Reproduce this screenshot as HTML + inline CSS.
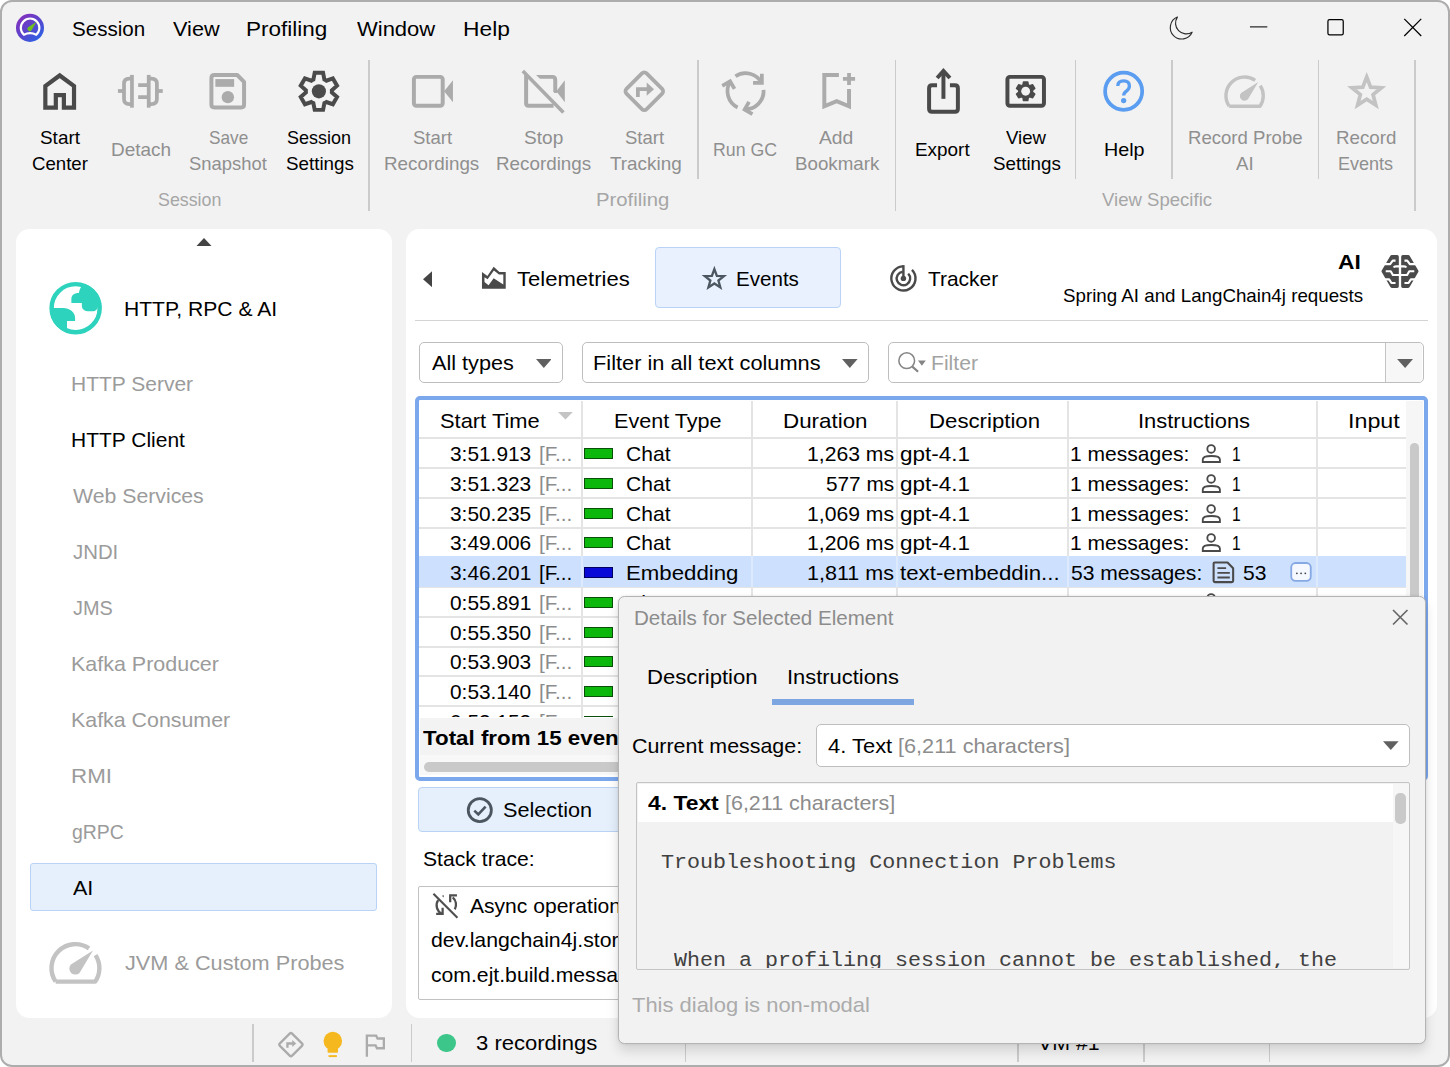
<!DOCTYPE html>
<html lang="en"><head><meta charset="utf-8"><title>JProfiler</title>
<style>
html,body{margin:0;padding:0;background:#fff;}
body{width:1450px;height:1067px;position:relative;overflow:hidden;font-family:"Liberation Sans",sans-serif;}
.b{position:absolute;box-sizing:border-box;}
.t{position:absolute;white-space:nowrap;transform-origin:0 0;display:block;}
.m{font-family:"Liberation Mono",monospace;}
.clip{overflow:hidden;}
</style></head><body>
<div class="b win" style="left:0.0px;top:0.0px;width:1450.0px;height:1067.0px;border:2px solid #adadad;border-radius:12px;background:#f2f2f2;"></div>
<span class="t" style="left:71.5px;top:19.0px;font-size:20.8px;line-height:20.8px;color:#000;transform:scaleX(0.9894);">Session</span>
<span class="t" style="left:172.6px;top:19.0px;font-size:20.8px;line-height:20.8px;color:#000;transform:scaleX(1.0420);">View</span>
<span class="t" style="left:246.3px;top:19.0px;font-size:20.8px;line-height:20.8px;color:#000;transform:scaleX(1.0821);">Profiling</span>
<span class="t" style="left:357.4px;top:19.0px;font-size:20.8px;line-height:20.8px;color:#000;transform:scaleX(1.0574);">Window</span>
<span class="t" style="left:463.2px;top:19.0px;font-size:20.8px;line-height:20.8px;color:#000;transform:scaleX(1.0957);">Help</span>
<span class="t" style="left:40.4px;top:129.0px;font-size:18.2px;line-height:18.2px;color:#000;transform:scaleX(1.0404);">Start</span>
<span class="t" style="left:31.8px;top:155.0px;font-size:18.2px;line-height:18.2px;color:#000;transform:scaleX(1.0241);">Center</span>
<span class="t" style="left:110.8px;top:141.0px;font-size:18.2px;line-height:18.2px;color:#8f8f8f;transform:scaleX(1.0426);">Detach</span>
<span class="t" style="left:208.9px;top:129.0px;font-size:18.2px;line-height:18.2px;color:#8f8f8f;transform:scaleX(0.9462);">Save</span>
<span class="t" style="left:189.2px;top:155.0px;font-size:18.2px;line-height:18.2px;color:#8f8f8f;transform:scaleX(1.0121);">Snapshot</span>
<span class="t" style="left:286.8px;top:129.0px;font-size:18.2px;line-height:18.2px;color:#000;transform:scaleX(0.9874);">Session</span>
<span class="t" style="left:285.7px;top:155.0px;font-size:18.2px;line-height:18.2px;color:#000;transform:scaleX(1.0321);">Settings</span>
<span class="t" style="left:412.8px;top:129.0px;font-size:18.2px;line-height:18.2px;color:#8f8f8f;transform:scaleX(1.0191);">Start</span>
<span class="t" style="left:384.0px;top:155.0px;font-size:18.2px;line-height:18.2px;color:#8f8f8f;transform:scaleX(1.0356);">Recordings</span>
<span class="t" style="left:524.4px;top:129.0px;font-size:18.2px;line-height:18.2px;color:#8f8f8f;transform:scaleX(1.0487);">Stop</span>
<span class="t" style="left:496.3px;top:155.0px;font-size:18.2px;line-height:18.2px;color:#8f8f8f;transform:scaleX(1.0345);">Recordings</span>
<span class="t" style="left:624.6px;top:129.0px;font-size:18.2px;line-height:18.2px;color:#8f8f8f;transform:scaleX(1.0164);">Start</span>
<span class="t" style="left:609.6px;top:155.0px;font-size:18.2px;line-height:18.2px;color:#8f8f8f;transform:scaleX(1.0383);">Tracking</span>
<span class="t" style="left:713.1px;top:141.0px;font-size:18.2px;line-height:18.2px;color:#8f8f8f;transform:scaleX(0.9747);">Run GC</span>
<span class="t" style="left:819.4px;top:129.0px;font-size:18.2px;line-height:18.2px;color:#8f8f8f;transform:scaleX(1.0606);">Add</span>
<span class="t" style="left:795.0px;top:155.0px;font-size:18.2px;line-height:18.2px;color:#8f8f8f;transform:scaleX(1.0294);">Bookmark</span>
<span class="t" style="left:915.4px;top:141.0px;font-size:18.2px;line-height:18.2px;color:#000;transform:scaleX(1.0401);">Export</span>
<span class="t" style="left:1005.7px;top:129.0px;font-size:18.2px;line-height:18.2px;color:#000;transform:scaleX(1.0222);">View</span>
<span class="t" style="left:992.6px;top:155.0px;font-size:18.2px;line-height:18.2px;color:#000;transform:scaleX(1.0321);">Settings</span>
<span class="t" style="left:1104.1px;top:141.0px;font-size:18.2px;line-height:18.2px;color:#000;transform:scaleX(1.0847);">Help</span>
<span class="t" style="left:1188.1px;top:129.0px;font-size:18.2px;line-height:18.2px;color:#8f8f8f;transform:scaleX(1.0208);">Record Probe</span>
<span class="t" style="left:1236.0px;top:155.0px;font-size:18.2px;line-height:18.2px;color:#8f8f8f;transform:scaleX(1.0282);">AI</span>
<span class="t" style="left:1336.1px;top:129.0px;font-size:18.2px;line-height:18.2px;color:#8f8f8f;transform:scaleX(1.0294);">Record</span>
<span class="t" style="left:1338.3px;top:155.0px;font-size:18.2px;line-height:18.2px;color:#8f8f8f;transform:scaleX(0.9905);">Events</span>
<span class="t" style="left:157.9px;top:191.0px;font-size:18.2px;line-height:18.2px;color:#a6a6a6;transform:scaleX(0.9795);">Session</span>
<span class="t" style="left:596.2px;top:191.0px;font-size:18.2px;line-height:18.2px;color:#a6a6a6;transform:scaleX(1.1147);">Profiling</span>
<span class="t" style="left:1101.7px;top:191.0px;font-size:18.2px;line-height:18.2px;color:#a6a6a6;transform:scaleX(1.0207);">View Specific</span>
<div class="b " style="left:368.0px;top:60.4px;width:1.6px;height:151.1px;background:#cbcbcb;"></div>
<div class="b " style="left:697.3px;top:60.4px;width:1.6px;height:118.6px;background:#cbcbcb;"></div>
<div class="b " style="left:894.9px;top:60.4px;width:1.6px;height:151.1px;background:#cbcbcb;"></div>
<div class="b " style="left:1074.8px;top:60.4px;width:1.6px;height:118.6px;background:#cbcbcb;"></div>
<div class="b " style="left:1171.1px;top:60.4px;width:1.6px;height:118.6px;background:#cbcbcb;"></div>
<div class="b " style="left:1317.9px;top:60.4px;width:1.6px;height:118.6px;background:#cbcbcb;"></div>
<div class="b " style="left:1414.2px;top:60.4px;width:1.6px;height:151.1px;background:#cbcbcb;"></div>
<div class="b " style="left:16.0px;top:229.0px;width:376.0px;height:789.0px;background:#fff;border-radius:13.5px;"></div>
<svg class="b" style="left:195.5px;top:237.5px;" width="16.0" height="8.5" viewBox="0 0 16 8.5"><path d="M8 0 L16 8.5 L0 8.5 Z" fill="#444"/></svg>
<span class="t" style="left:124.3px;top:299.0px;font-size:20.8px;line-height:20.8px;color:#000;transform:scaleX(1.0137);">HTTP, RPC &amp; AI</span>
<span class="t" style="left:71.1px;top:374.0px;font-size:20.8px;line-height:20.8px;color:#9b9b9b;transform:scaleX(1.0094);">HTTP Server</span>
<span class="t" style="left:71.1px;top:430.0px;font-size:20.8px;line-height:20.8px;color:#000;transform:scaleX(1.0092);">HTTP Client</span>
<span class="t" style="left:72.8px;top:486.0px;font-size:20.8px;line-height:20.8px;color:#9b9b9b;transform:scaleX(1.0221);">Web Services</span>
<span class="t" style="left:72.5px;top:542.0px;font-size:20.8px;line-height:20.8px;color:#9b9b9b;transform:scaleX(0.9797);">JNDI</span>
<span class="t" style="left:72.5px;top:598.0px;font-size:20.8px;line-height:20.8px;color:#9b9b9b;transform:scaleX(0.9541);">JMS</span>
<span class="t" style="left:71.1px;top:654.0px;font-size:20.8px;line-height:20.8px;color:#9b9b9b;transform:scaleX(1.0322);">Kafka Producer</span>
<span class="t" style="left:71.1px;top:710.0px;font-size:20.8px;line-height:20.8px;color:#9b9b9b;transform:scaleX(1.0276);">Kafka Consumer</span>
<span class="t" style="left:71.0px;top:766.0px;font-size:20.8px;line-height:20.8px;color:#9b9b9b;transform:scaleX(1.0742);">RMI</span>
<span class="t" style="left:72.0px;top:822.0px;font-size:20.8px;line-height:20.8px;color:#9b9b9b;transform:scaleX(0.9356);">gRPC</span>
<div class="b " style="left:30.0px;top:862.8px;width:346.8px;height:48.0px;background:#e6f0fd;border:1.5px solid #b9d3f6;border-radius:3px;"></div>
<span class="t" style="left:72.8px;top:878.0px;font-size:20.8px;line-height:20.8px;color:#000;transform:scaleX(1.0346);">AI</span>
<span class="t" style="left:124.5px;top:953.0px;font-size:20.8px;line-height:20.8px;color:#9b9b9b;transform:scaleX(1.0432);">JVM &amp; Custom Probes</span>
<div class="b " style="left:252.0px;top:1024.0px;width:1.6px;height:38.0px;background:#cbcbcb;"></div>
<div class="b " style="left:410.7px;top:1024.0px;width:1.6px;height:38.0px;background:#cbcbcb;"></div>
<div class="b " style="left:684.5px;top:1024.0px;width:1.6px;height:38.0px;background:#cbcbcb;"></div>
<div class="b " style="left:1017.2px;top:1024.0px;width:1.6px;height:38.0px;background:#cbcbcb;"></div>
<div class="b " style="left:1143.2px;top:1024.0px;width:1.6px;height:38.0px;background:#cbcbcb;"></div>
<div class="b " style="left:1268.9px;top:1024.0px;width:1.6px;height:38.0px;background:#cbcbcb;"></div>
<div class="b " style="left:437.3px;top:1033.6px;width:18.8px;height:18.8px;background:#3cc68a;border-radius:50%;"></div>
<span class="t" style="left:476.0px;top:1033.0px;font-size:20.8px;line-height:20.8px;color:#000;transform:scaleX(1.0597);">3 recordings</span>
<span class="t" style="left:1038.0px;top:1033.0px;font-size:20.8px;line-height:20.8px;color:#000;transform:scaleX(1.0274);">VM #1</span>
<div class="b " style="left:406.0px;top:229.0px;width:1031.2px;height:789.0px;background:#fff;border-radius:13.5px;"></div>
<svg class="b" style="left:422.8px;top:270.7px;" width="9.2" height="16.3" viewBox="0 0 9 16"><path d="M9 0 L9 16 L0 8 Z" fill="#444"/></svg>
<span class="t" style="left:517.3px;top:269.0px;font-size:20.8px;line-height:20.8px;color:#000;transform:scaleX(1.0594);">Telemetries</span>
<div class="b " style="left:654.5px;top:247.2px;width:186.1px;height:60.8px;background:#e8f1fd;border:1.5px solid #b9d3f6;border-radius:4px;"></div>
<span class="t" style="left:736.2px;top:269.0px;font-size:20.8px;line-height:20.8px;color:#000;transform:scaleX(0.9893);">Events</span>
<span class="t" style="left:927.5px;top:269.0px;font-size:20.8px;line-height:20.8px;color:#000;transform:scaleX(1.0064);">Tracker</span>
<span class="t" style="left:1338.2px;top:252.0px;font-size:20.8px;line-height:20.8px;color:#000;transform:scaleX(1.0936);font-weight:bold;">AI</span>
<span class="t" style="left:1062.9px;top:287.0px;font-size:18.2px;line-height:18.2px;color:#000;transform:scaleX(1.0303);">Spring AI and LangChain4j requests</span>
<div class="b " style="left:415.2px;top:319.5px;width:1013.1px;height:1.5px;background:#d4d4d4;"></div>
<div class="b " style="left:418.8px;top:341.6px;width:144.2px;height:41.6px;background:#fff;border:1.6px solid #bebebe;border-radius:5px;"></div>
<span class="t" style="left:431.9px;top:353.0px;font-size:20.8px;line-height:20.8px;color:#000;transform:scaleX(1.0411);">All types</span>
<svg class="b" style="left:535.8px;top:358.7px;" width="15.6" height="9.0" viewBox="0 0 16 9"><path d="M0 0 L16 0 L8 9 Z" fill="#606060"/></svg>
<div class="b " style="left:582.1px;top:341.6px;width:287.1px;height:41.6px;background:#fff;border:1.6px solid #bebebe;border-radius:5px;"></div>
<span class="t" style="left:593.1px;top:353.0px;font-size:20.8px;line-height:20.8px;color:#000;transform:scaleX(1.0476);">Filter in all text columns</span>
<svg class="b" style="left:842.4px;top:358.7px;" width="15.6" height="9.0" viewBox="0 0 16 9"><path d="M0 0 L16 0 L8 9 Z" fill="#606060"/></svg>
<div class="b " style="left:888.0px;top:341.6px;width:535.9px;height:41.6px;background:#fff;border:1.6px solid #bebebe;border-radius:5px;"></div>
<div class="b " style="left:1384.5px;top:343.0px;width:1.5px;height:38.8px;background:#c4c4c4;"></div>
<div class="b " style="left:1386.0px;top:343.2px;width:36.3px;height:38.4px;background:#f7f7f7;border-radius:0 4px 4px 0;"></div>
<svg class="b" style="left:1396.8px;top:358.7px;" width="16.2" height="9.0" viewBox="0 0 16 9"><path d="M0 0 L16 0 L8 9 Z" fill="#606060"/></svg>
<span class="t" style="left:930.9px;top:353.0px;font-size:20.8px;line-height:20.8px;color:#a3a3a3;transform:scaleX(1.0157);">Filter</span>
<div class="b " style="left:415.2px;top:395.9px;width:1012.4px;height:384.9px;background:#fff;border:4.8px solid #7ba7ec;border-radius:5px;"></div>
<span class="t" style="left:439.5px;top:411.0px;font-size:20.8px;line-height:20.8px;color:#000;transform:scaleX(1.0519);">Start Time</span>
<span class="t" style="left:614.4px;top:411.0px;font-size:20.8px;line-height:20.8px;color:#000;transform:scaleX(1.0376);">Event Type</span>
<span class="t" style="left:783.1px;top:411.0px;font-size:20.8px;line-height:20.8px;color:#000;transform:scaleX(1.0751);">Duration</span>
<span class="t" style="left:928.6px;top:411.0px;font-size:20.8px;line-height:20.8px;color:#000;transform:scaleX(1.0674);">Description</span>
<span class="t" style="left:1138.4px;top:411.0px;font-size:20.8px;line-height:20.8px;color:#000;transform:scaleX(1.0540);">Instructions</span>
<span class="t" style="left:1348.3px;top:411.0px;font-size:20.8px;line-height:20.8px;color:#000;transform:scaleX(1.1195);">Input</span>
<svg class="b" style="left:558.2px;top:412.4px;" width="14.8" height="7.6" viewBox="0 0 16 8"><path d="M0 0 L16 0 L8 8 Z" fill="#c4c4c4"/></svg>
<div class="b " style="left:419.2px;top:437.0px;width:986.6px;height:1.5px;background:#e4e4e4;"></div>
<div class="b " style="left:419.2px;top:467.0px;width:986.6px;height:1.5px;background:#e4e4e4;"></div>
<div class="b " style="left:419.2px;top:497.0px;width:986.6px;height:1.5px;background:#e4e4e4;"></div>
<div class="b " style="left:419.2px;top:527.0px;width:986.6px;height:1.5px;background:#e4e4e4;"></div>
<div class="b " style="left:419.2px;top:556.0px;width:986.6px;height:1.5px;background:#e4e4e4;"></div>
<div class="b " style="left:419.2px;top:586.0px;width:986.6px;height:1.5px;background:#e4e4e4;"></div>
<div class="b " style="left:419.2px;top:616.0px;width:986.6px;height:1.5px;background:#e4e4e4;"></div>
<div class="b " style="left:419.2px;top:646.0px;width:986.6px;height:1.5px;background:#e4e4e4;"></div>
<div class="b " style="left:419.2px;top:675.0px;width:986.6px;height:1.5px;background:#e4e4e4;"></div>
<div class="b " style="left:419.2px;top:705.0px;width:986.6px;height:1.5px;background:#e4e4e4;"></div>
<div class="b " style="left:581.0px;top:400.5px;width:1.5px;height:317.3px;background:#e4e4e4;"></div>
<div class="b " style="left:751.0px;top:400.5px;width:1.5px;height:317.3px;background:#e4e4e4;"></div>
<div class="b " style="left:896.0px;top:400.5px;width:1.5px;height:317.3px;background:#e4e4e4;"></div>
<div class="b " style="left:1067.0px;top:400.5px;width:1.5px;height:317.3px;background:#e4e4e4;"></div>
<div class="b " style="left:1316.0px;top:400.5px;width:1.5px;height:317.3px;background:#e4e4e4;"></div>
<div class="b " style="left:419.2px;top:555.8px;width:986.4px;height:31.6px;background:#cde0fd;"></div>
<div class="b " style="left:581.0px;top:555.8px;width:1.5px;height:31.6px;background:#dde9fc;"></div>
<div class="b " style="left:751.0px;top:555.8px;width:1.5px;height:31.6px;background:#dde9fc;"></div>
<div class="b " style="left:896.0px;top:555.8px;width:1.5px;height:31.6px;background:#dde9fc;"></div>
<div class="b " style="left:1067.0px;top:555.8px;width:1.5px;height:31.6px;background:#dde9fc;"></div>
<div class="b " style="left:1316.0px;top:555.8px;width:1.5px;height:31.6px;background:#dde9fc;"></div>
<div class="b clip" style="left:419.2px;top:400px;width:986.6px;height:317px;">
<span class="t" style="left:30.8px;top:44.0px;font-size:20.8px;line-height:20.8px;color:#000;transform:scaleX(1.0031);">3:51.913</span>
<span class="t" style="left:119.5px;top:44.0px;font-size:20.8px;line-height:20.8px;color:#8c8c8c;transform:scaleX(0.9946);">[F...</span>
<div class="b" style="left:165.0px;top:48.0px;width:28.8px;height:11.1px;background:#0cb80c;border:1px solid #0a4f0a;"></div>
<span class="t" style="left:207.1px;top:44.0px;font-size:20.8px;line-height:20.8px;color:#000;transform:scaleX(1.0129);">Chat</span>
<span class="t" style="left:387.6px;top:44.0px;font-size:20.8px;line-height:20.8px;color:#000;transform:scaleX(1.0168);">1,263 ms</span>
<span class="t" style="left:480.7px;top:44.0px;font-size:20.8px;line-height:20.8px;color:#000;transform:scaleX(1.0807);">gpt-4.1</span>
<span class="t" style="left:650.8px;top:44.0px;font-size:20.8px;line-height:20.8px;color:#000;transform:scaleX(1.0122);">1 messages:</span>
<span class="t" style="left:812.6px;top:44.0px;font-size:20.8px;line-height:20.8px;color:#000;transform:scaleX(0.7515);">1</span>
<span class="t" style="left:30.8px;top:74.0px;font-size:20.8px;line-height:20.8px;color:#000;transform:scaleX(1.0031);">3:51.323</span>
<span class="t" style="left:119.5px;top:74.0px;font-size:20.8px;line-height:20.8px;color:#8c8c8c;transform:scaleX(0.9946);">[F...</span>
<div class="b" style="left:165.0px;top:77.8px;width:28.8px;height:11.1px;background:#0cb80c;border:1px solid #0a4f0a;"></div>
<span class="t" style="left:207.1px;top:74.0px;font-size:20.8px;line-height:20.8px;color:#000;transform:scaleX(1.0129);">Chat</span>
<span class="t" style="left:406.5px;top:74.0px;font-size:20.8px;line-height:20.8px;color:#000;transform:scaleX(0.9990);">577 ms</span>
<span class="t" style="left:480.7px;top:74.0px;font-size:20.8px;line-height:20.8px;color:#000;transform:scaleX(1.0807);">gpt-4.1</span>
<span class="t" style="left:650.8px;top:74.0px;font-size:20.8px;line-height:20.8px;color:#000;transform:scaleX(1.0122);">1 messages:</span>
<span class="t" style="left:812.6px;top:74.0px;font-size:20.8px;line-height:20.8px;color:#000;transform:scaleX(0.7515);">1</span>
<span class="t" style="left:30.8px;top:104.0px;font-size:20.8px;line-height:20.8px;color:#000;transform:scaleX(1.0031);">3:50.235</span>
<span class="t" style="left:119.5px;top:104.0px;font-size:20.8px;line-height:20.8px;color:#8c8c8c;transform:scaleX(0.9946);">[F...</span>
<div class="b" style="left:165.0px;top:107.5px;width:28.8px;height:11.1px;background:#0cb80c;border:1px solid #0a4f0a;"></div>
<span class="t" style="left:207.1px;top:104.0px;font-size:20.8px;line-height:20.8px;color:#000;transform:scaleX(1.0129);">Chat</span>
<span class="t" style="left:387.6px;top:104.0px;font-size:20.8px;line-height:20.8px;color:#000;transform:scaleX(1.0168);">1,069 ms</span>
<span class="t" style="left:480.7px;top:104.0px;font-size:20.8px;line-height:20.8px;color:#000;transform:scaleX(1.0807);">gpt-4.1</span>
<span class="t" style="left:650.8px;top:104.0px;font-size:20.8px;line-height:20.8px;color:#000;transform:scaleX(1.0122);">1 messages:</span>
<span class="t" style="left:812.6px;top:104.0px;font-size:20.8px;line-height:20.8px;color:#000;transform:scaleX(0.7515);">1</span>
<span class="t" style="left:30.8px;top:133.0px;font-size:20.8px;line-height:20.8px;color:#000;transform:scaleX(1.0031);">3:49.006</span>
<span class="t" style="left:119.5px;top:133.0px;font-size:20.8px;line-height:20.8px;color:#8c8c8c;transform:scaleX(0.9946);">[F...</span>
<div class="b" style="left:165.0px;top:137.2px;width:28.8px;height:11.1px;background:#0cb80c;border:1px solid #0a4f0a;"></div>
<span class="t" style="left:207.1px;top:133.0px;font-size:20.8px;line-height:20.8px;color:#000;transform:scaleX(1.0129);">Chat</span>
<span class="t" style="left:387.6px;top:133.0px;font-size:20.8px;line-height:20.8px;color:#000;transform:scaleX(1.0168);">1,206 ms</span>
<span class="t" style="left:480.7px;top:133.0px;font-size:20.8px;line-height:20.8px;color:#000;transform:scaleX(1.0807);">gpt-4.1</span>
<span class="t" style="left:650.8px;top:133.0px;font-size:20.8px;line-height:20.8px;color:#000;transform:scaleX(1.0122);">1 messages:</span>
<span class="t" style="left:812.6px;top:133.0px;font-size:20.8px;line-height:20.8px;color:#000;transform:scaleX(0.7515);">1</span>
<span class="t" style="left:30.8px;top:163.0px;font-size:20.8px;line-height:20.8px;color:#000;transform:scaleX(1.0044);">3:46.201</span>
<span class="t" style="left:119.5px;top:163.0px;font-size:20.8px;line-height:20.8px;color:#000;transform:scaleX(0.9946);">[F...</span>
<div class="b" style="left:165.0px;top:167.0px;width:28.8px;height:11.1px;background:#0a0ad8;border:1px solid #000060;"></div>
<span class="t" style="left:206.4px;top:163.0px;font-size:20.8px;line-height:20.8px;color:#000;transform:scaleX(1.0681);">Embedding</span>
<span class="t" style="left:387.6px;top:163.0px;font-size:20.8px;line-height:20.8px;color:#000;transform:scaleX(1.0362);">1,811 ms</span>
<span class="t" style="left:481.3px;top:163.0px;font-size:20.8px;line-height:20.8px;color:#000;transform:scaleX(1.0703);">text-embeddin...</span>
<span class="t" style="left:651.6px;top:163.0px;font-size:20.8px;line-height:20.8px;color:#000;transform:scaleX(1.0136);">53 messages:</span>
<span class="t" style="left:823.6px;top:163.0px;font-size:20.8px;line-height:20.8px;color:#000;transform:scaleX(1.0129);">53</span>
<span class="t" style="left:30.8px;top:193.0px;font-size:20.8px;line-height:20.8px;color:#000;transform:scaleX(1.0044);">0:55.891</span>
<span class="t" style="left:119.5px;top:193.0px;font-size:20.8px;line-height:20.8px;color:#8c8c8c;transform:scaleX(0.9946);">[F...</span>
<div class="b" style="left:165.0px;top:196.8px;width:28.8px;height:11.1px;background:#0cb80c;border:1px solid #0a4f0a;"></div>
<span class="t" style="left:207.1px;top:193.0px;font-size:20.8px;line-height:20.8px;color:#000;transform:scaleX(1.0129);">Chat</span>
<span class="t" style="left:387.6px;top:193.0px;font-size:20.8px;line-height:20.8px;color:#000;transform:scaleX(1.0168);">1,276 ms</span>
<span class="t" style="left:480.7px;top:193.0px;font-size:20.8px;line-height:20.8px;color:#000;transform:scaleX(1.0807);">gpt-4.1</span>
<span class="t" style="left:650.8px;top:193.0px;font-size:20.8px;line-height:20.8px;color:#000;transform:scaleX(1.0122);">1 messages:</span>
<span class="t" style="left:812.6px;top:193.0px;font-size:20.8px;line-height:20.8px;color:#000;transform:scaleX(0.7515);">1</span>
<span class="t" style="left:30.8px;top:223.0px;font-size:20.8px;line-height:20.8px;color:#000;transform:scaleX(1.0018);">0:55.350</span>
<span class="t" style="left:119.5px;top:223.0px;font-size:20.8px;line-height:20.8px;color:#8c8c8c;transform:scaleX(0.9946);">[F...</span>
<div class="b" style="left:165.0px;top:226.5px;width:28.8px;height:11.1px;background:#0cb80c;border:1px solid #0a4f0a;"></div>
<span class="t" style="left:207.1px;top:223.0px;font-size:20.8px;line-height:20.8px;color:#000;transform:scaleX(1.0129);">Chat</span>
<span class="t" style="left:387.6px;top:223.0px;font-size:20.8px;line-height:20.8px;color:#000;transform:scaleX(1.0168);">1,100 ms</span>
<span class="t" style="left:480.7px;top:223.0px;font-size:20.8px;line-height:20.8px;color:#000;transform:scaleX(1.0807);">gpt-4.1</span>
<span class="t" style="left:650.8px;top:223.0px;font-size:20.8px;line-height:20.8px;color:#000;transform:scaleX(1.0122);">1 messages:</span>
<span class="t" style="left:812.6px;top:223.0px;font-size:20.8px;line-height:20.8px;color:#000;transform:scaleX(0.7515);">1</span>
<span class="t" style="left:30.8px;top:252.0px;font-size:20.8px;line-height:20.8px;color:#000;transform:scaleX(1.0031);">0:53.903</span>
<span class="t" style="left:119.5px;top:252.0px;font-size:20.8px;line-height:20.8px;color:#8c8c8c;transform:scaleX(0.9946);">[F...</span>
<div class="b" style="left:165.0px;top:256.2px;width:28.8px;height:11.1px;background:#0cb80c;border:1px solid #0a4f0a;"></div>
<span class="t" style="left:207.1px;top:252.0px;font-size:20.8px;line-height:20.8px;color:#000;transform:scaleX(1.0129);">Chat</span>
<span class="t" style="left:387.6px;top:252.0px;font-size:20.8px;line-height:20.8px;color:#000;transform:scaleX(1.0168);">1,312 ms</span>
<span class="t" style="left:480.7px;top:252.0px;font-size:20.8px;line-height:20.8px;color:#000;transform:scaleX(1.0807);">gpt-4.1</span>
<span class="t" style="left:650.8px;top:252.0px;font-size:20.8px;line-height:20.8px;color:#000;transform:scaleX(1.0122);">1 messages:</span>
<span class="t" style="left:812.6px;top:252.0px;font-size:20.8px;line-height:20.8px;color:#000;transform:scaleX(0.7515);">1</span>
<span class="t" style="left:30.8px;top:282.0px;font-size:20.8px;line-height:20.8px;color:#000;transform:scaleX(1.0018);">0:53.140</span>
<span class="t" style="left:119.5px;top:282.0px;font-size:20.8px;line-height:20.8px;color:#8c8c8c;transform:scaleX(0.9946);">[F...</span>
<div class="b" style="left:165.0px;top:286.0px;width:28.8px;height:11.1px;background:#0cb80c;border:1px solid #0a4f0a;"></div>
<span class="t" style="left:207.1px;top:282.0px;font-size:20.8px;line-height:20.8px;color:#000;transform:scaleX(1.0129);">Chat</span>
<span class="t" style="left:387.6px;top:282.0px;font-size:20.8px;line-height:20.8px;color:#000;transform:scaleX(1.0168);">1,021 ms</span>
<span class="t" style="left:480.7px;top:282.0px;font-size:20.8px;line-height:20.8px;color:#000;transform:scaleX(1.0807);">gpt-4.1</span>
<span class="t" style="left:650.8px;top:282.0px;font-size:20.8px;line-height:20.8px;color:#000;transform:scaleX(1.0122);">1 messages:</span>
<span class="t" style="left:812.6px;top:282.0px;font-size:20.8px;line-height:20.8px;color:#000;transform:scaleX(0.7515);">1</span>
<span class="t" style="left:30.8px;top:312.0px;font-size:20.8px;line-height:20.8px;color:#000;transform:scaleX(1.0031);">0:53.153</span>
<span class="t" style="left:119.5px;top:312.0px;font-size:20.8px;line-height:20.8px;color:#8c8c8c;transform:scaleX(0.9946);">[F...</span>
<div class="b" style="left:165.0px;top:315.8px;width:28.8px;height:11.1px;background:#0cb80c;border:1px solid #0a4f0a;"></div>
<span class="t" style="left:207.1px;top:312.0px;font-size:20.8px;line-height:20.8px;color:#000;transform:scaleX(1.0129);">Chat</span>
<span class="t" style="left:387.6px;top:312.0px;font-size:20.8px;line-height:20.8px;color:#000;transform:scaleX(1.0168);">1,150 ms</span>
<span class="t" style="left:480.7px;top:312.0px;font-size:20.8px;line-height:20.8px;color:#000;transform:scaleX(1.0807);">gpt-4.1</span>
<span class="t" style="left:650.8px;top:312.0px;font-size:20.8px;line-height:20.8px;color:#000;transform:scaleX(1.0122);">1 messages:</span>
<span class="t" style="left:812.6px;top:312.0px;font-size:20.8px;line-height:20.8px;color:#000;transform:scaleX(0.7515);">1</span>
</div>
<div class="b " style="left:420.0px;top:717.8px;width:1002.8px;height:37.6px;background:#f3f3f3;"></div>
<div class="b " style="left:420.0px;top:755.4px;width:1002.8px;height:20.0px;background:#f8f8f8;"></div>
<span class="t" style="left:422.7px;top:728.0px;font-size:20.8px;line-height:20.8px;color:#000;transform:scaleX(1.0742);font-weight:bold;">Total from 15 events</span>
<div class="b " style="left:424.0px;top:761.6px;width:776.0px;height:10.3px;background:#c9c9c9;border-radius:5px;"></div>
<div class="b " style="left:1405.6px;top:400.6px;width:17.4px;height:375.0px;background:#f6f6f6;"></div>
<div class="b " style="left:1409.6px;top:443.0px;width:9.6px;height:257.0px;background:#c9c9c9;border-radius:5px;"></div>
<div class="b " style="left:418.1px;top:786.8px;width:1005.8px;height:44.8px;background:#e6f0fd;border:1.5px solid #b9d3f6;border-radius:4px;"></div>
<span class="t" style="left:502.9px;top:800.0px;font-size:20.8px;line-height:20.8px;color:#000;transform:scaleX(1.0419);">Selection</span>
<span class="t" style="left:423.4px;top:849.0px;font-size:20.8px;line-height:20.8px;color:#000;transform:scaleX(1.0167);">Stack trace:</span>
<div class="b " style="left:418.3px;top:885.6px;width:1005.6px;height:114.7px;background:#fff;border:1.5px solid #c2c2c2;border-radius:2px;"></div>
<span class="t" style="left:469.9px;top:896.0px;font-size:20.8px;line-height:20.8px;color:#000;transform:scaleX(1.0127);">Async operation</span>
<span class="t" style="left:430.8px;top:930.0px;font-size:20.8px;line-height:20.8px;color:#000;transform:scaleX(1.0229);">dev.langchain4j.store</span>
<span class="t" style="left:430.9px;top:965.0px;font-size:20.8px;line-height:20.8px;color:#000;transform:scaleX(1.0178);">com.ejt.build.message</span>
<div class="b " style="left:618.2px;top:596.3px;width:807.8px;height:447.3px;background:#f2f2f2;border:1.7px solid #b4b4b4;border-radius:6.5px;box-shadow:0 7px 12px rgba(0,0,0,0.13),0 0 3px rgba(0,0,0,0.10);"></div>
<span class="t" style="left:634.4px;top:608.0px;font-size:20.8px;line-height:20.8px;color:#8c8c8c;transform:scaleX(0.9888);">Details for Selected Element</span>
<svg class="b" style="left:1392.0px;top:609.0px;" width="16.5" height="16.5" viewBox="0 0 16 16"><path d="M1 1 L15 15 M15 1 L1 15" stroke="#666" stroke-width="1.6" fill="none"/></svg>
<span class="t" style="left:647.3px;top:667.0px;font-size:20.8px;line-height:20.8px;color:#000;transform:scaleX(1.0634);">Description</span>
<span class="t" style="left:786.5px;top:667.0px;font-size:20.8px;line-height:20.8px;color:#000;transform:scaleX(1.0531);">Instructions</span>
<div class="b " style="left:772.2px;top:699.0px;width:141.9px;height:6.0px;background:#7ea6e0;"></div>
<span class="t" style="left:631.7px;top:736.0px;font-size:20.8px;line-height:20.8px;color:#000;transform:scaleX(1.0293);">Current message:</span>
<div class="b " style="left:816.4px;top:724.1px;width:593.8px;height:42.7px;background:#fff;border:1.6px solid #bebebe;border-radius:5px;"></div>
<span class="t" style="left:827.6px;top:736.0px;font-size:20.8px;line-height:20.8px;color:#000;transform:scaleX(1.0542);">4. Text</span>
<span class="t" style="left:897.5px;top:736.0px;font-size:20.8px;line-height:20.8px;color:#8c8c8c;transform:scaleX(1.0423);">[6,211 characters]</span>
<svg class="b" style="left:1383.0px;top:741.1px;" width="15.6" height="9.1" viewBox="0 0 16 9"><path d="M0 0 L16 0 L8 9 Z" fill="#606060"/></svg>
<div class="b " style="left:636.0px;top:782.0px;width:774.2px;height:187.7px;background:#f2f2f2;border:1.5px solid #c4c4c4;border-radius:2px;overflow:hidden;"></div>
<div class="b " style="left:637.5px;top:783.5px;width:755.0px;height:38.5px;background:#fff;"></div>
<div class="b " style="left:1392.5px;top:783.5px;width:16.2px;height:184.7px;background:#f6f6f6;"></div>
<span class="t" style="left:648.1px;top:793.0px;font-size:20.8px;line-height:20.8px;color:#000;transform:scaleX(1.0993);font-weight:bold;">4. Text</span>
<span class="t" style="left:725.4px;top:793.0px;font-size:20.8px;line-height:20.8px;color:#8c8c8c;transform:scaleX(1.0318);">[6,211 characters]</span>
<div class="b " style="left:1395.0px;top:792.9px;width:10.8px;height:30.7px;background:#c9c9c9;border-radius:5px;"></div>
<div class="b clip" style="left:637.5px;top:822px;width:757px;height:146.2px;">
<span class="t m" style="left:23.6px;top:32.0px;font-size:19.5px;line-height:19.5px;color:#404040;transform:scaleX(1.1123);">Troubleshooting Connection Problems</span>
<span class="t m" style="left:36.8px;top:130.0px;font-size:19.5px;line-height:19.5px;color:#404040;transform:scaleX(1.1111);">When a profiling session cannot be established, the</span>
</div>
<span class="t" style="left:632.4px;top:995.0px;font-size:20.8px;line-height:20.8px;color:#ababab;transform:scaleX(1.0554);">This dialog is non-modal</span>
<svg class="b" style="left:30px;top:60px;" width="160" height="65" viewBox="0 0 1450 589">
<path d="M139 432 V236 L269 140 L399 236 V432 H307 V318 H234 V432 Z" fill="none" stroke="#4a4a4a" stroke-width="38" stroke-linejoin="miter"/>
<g fill="none" stroke="#ababab" stroke-width="34">
<path d="M924 135 V432"/><path d="M924 168 H900 Q852 168 852 214 V354 Q852 400 900 400 H924"/><path d="M797 281 H852"/>
<path d="M1076 135 V432"/><path d="M1076 168 H1100 Q1150 168 1150 214 V354 Q1150 400 1100 400 H1076"/><path d="M1150 281 H1203"/>
<path d="M980 228 H1076 M980 336 H1076"/></g></svg>
<svg class="b" style="left:190px;top:60px;" width="160" height="65" viewBox="0 0 1450 589">
<path d="M222 136 H428 L490 198 V404 Q490 430 464 430 H222 Q194 430 194 404 V164 Q194 136 222 136 Z" fill="none" stroke="#ababab" stroke-width="36" stroke-linejoin="round"/>
<rect x="230" y="173" width="170" height="70" fill="#ababab"/><circle cx="343" cy="337" r="56" fill="#ababab"/>
<path d="M1118.0 177.1L1130.0 116.0L1206.0 116.0L1218.0 177.1A118 118 0 0 1 1235.6 187.3L1294.5 167.1L1332.5 232.9L1285.6 273.9A118 118 0 0 1 1285.6 294.1L1332.5 335.1L1294.5 400.9L1235.6 380.7A118 118 0 0 1 1218.0 390.9L1206.0 452.0L1130.0 452.0L1118.0 390.9A118 118 0 0 1 1100.4 380.7L1041.5 400.9L1003.5 335.1L1050.4 294.1A118 118 0 0 1 1050.4 273.9L1003.5 232.9L1041.5 167.1L1100.4 187.3A118 118 0 0 1 1118.0 177.1Z" fill="none" stroke="#4a4a4a" stroke-width="36" stroke-linejoin="miter"/>
<circle cx="1168" cy="284" r="64" fill="#4a4a4a"/></svg>
<svg class="b" style="left:400px;top:60px;" width="110" height="65" viewBox="0 0 997 589">
<rect x="126" y="153" width="261" height="261" rx="22" fill="none" stroke="#ababab" stroke-width="36"/>
<path d="M400 283 L480 183 V383 Z" fill="#ababab"/></svg>
<svg class="b" style="left:510px;top:60px;" width="160" height="65" viewBox="0 0 1450 589">
<path d="M230 153 H383 Q410 153 410 180 V300 M146 135 V392 Q146 414 168 414 H395" fill="none" stroke="#ababab" stroke-width="36"/>
<path d="M420 283 L497 183 V383 Z" fill="#ababab"/>
<path d="M150 75 L530 448" stroke="#f2f2f2" stroke-width="34"/>
<path d="M116 100 L484 476" stroke="#ababab" stroke-width="32"/>
<rect x="1087.6" y="153.6" width="258.8" height="258.8" rx="30" transform="rotate(45 1217 283)" fill="none" stroke="#ababab" stroke-width="34"/>
<path d="M1159.0 335.0 V265.0 H1247.0" fill="none" stroke="#ababab" stroke-width="34" stroke-linejoin="miter"/><path d="M1239.0 205.0 L1305.0 265.0 L1239.0 325.0 Z" fill="#ababab"/></svg>
<svg class="b" style="left:710px;top:60px;" width="160" height="65" viewBox="0 0 1450 589">
<g fill="none" stroke="#ababab" stroke-width="34"><g transform="rotate(0 322 283)"><path d="M230.5 147.5 A164 164 0 0 1 468 209" /><path d="M470 125 V207 H390" stroke-linejoin="miter"/></g><g transform="rotate(120 322 283)"><path d="M230.5 147.5 A164 164 0 0 1 468 209" /><path d="M470 125 V207 H390" stroke-linejoin="miter"/></g><g transform="rotate(240 322 283)"><path d="M230.5 147.5 A164 164 0 0 1 468 209" /><path d="M470 125 V207 H390" stroke-linejoin="miter"/></g></g>
<path d="M1168 136 H1036 V420 L1148 372 L1260 420 V262" fill="none" stroke="#ababab" stroke-width="36" stroke-linejoin="miter"/>
<path d="M1205 172 H1315 M1260 118 V226" stroke="#ababab" stroke-width="34"/></svg>
<svg class="b" style="left:910px;top:60px;" width="160" height="65" viewBox="0 0 1450 589">
<path d="M245 228 H200 Q173 228 173 255 V442 Q173 469 200 469 H407 Q434 469 434 442 V255 Q434 228 407 228 H362" fill="none" stroke="#4a4a4a" stroke-width="36"/>
<path d="M303 352 V110" stroke="#4a4a4a" stroke-width="36"/><path d="M246 163 L303 100 L362 163" fill="none" stroke="#4a4a4a" stroke-width="36" stroke-linejoin="miter"/>
<rect x="883" y="153" width="331" height="261" rx="22" fill="none" stroke="#4a4a4a" stroke-width="36"/>
<path d="M1024.0 225.8L1029.0 199.0L1067.0 199.0L1072.0 225.8A62 62 0 0 1 1085.5 233.6L1111.2 224.5L1130.2 257.5L1109.5 275.2A62 62 0 0 1 1109.5 290.8L1130.2 308.5L1111.2 341.5L1085.5 332.4A62 62 0 0 1 1072.0 340.2L1067.0 367.0L1029.0 367.0L1024.0 340.2A62 62 0 0 1 1010.5 332.4L984.8 341.5L965.8 308.5L986.5 290.8A62 62 0 0 1 986.5 275.2L965.8 257.5L984.8 224.5L1010.5 233.6A62 62 0 0 1 1024.0 225.8Z" fill="#4a4a4a" stroke="#4a4a4a" stroke-width="14" stroke-linejoin="round"/>
<circle cx="1048" cy="283" r="40" fill="#f2f2f2"/></svg>
<svg class="b" style="left:1090px;top:60px;" width="90" height="65" viewBox="0 0 815.6 589">
<circle cx="305" cy="283" r="168" fill="none" stroke="#5b9df0" stroke-width="34"/>
<path d="M252 236 Q252 190 305 190 Q357 190 357 236 Q357 262 330 282 Q305 300 305 322" fill="none" stroke="#5b9df0" stroke-width="30"/>
<circle cx="305" cy="368" r="24" fill="#5b9df0"/></svg>
<svg class="b" style="left:1216.94px;top:65.74px" width="56.11" height="56.11" viewBox="0 0 1067 1067"><path d="M232 765 A355 355 0 0 1 726 272 M823 372 A355 355 0 0 1 818 765 L232 765" fill="none" stroke="#c3c3c3" stroke-width="65" stroke-linejoin="round"/><path d="M785 305 L458 512 A82 82 0 1 0 588 632 Z" fill="#c3c3c3"/></svg>
<svg class="b" style="left:40px;top:930px;" width="72" height="72" viewBox="0 0 1067 1067"><path d="M232 765 A355 355 0 0 1 726 272 M823 372 A355 355 0 0 1 818 765 L232 765" fill="none" stroke="#c3c3c3" stroke-width="65" stroke-linejoin="round"/><path d="M785 305 L458 512 A82 82 0 1 0 588 632 Z" fill="#c3c3c3"/></svg>
<svg class="b" style="left:1340px;top:65px" width="54" height="50" viewBox="0 0 54 50"><polygon points="26.70,12.02 30.61,22.11 41.42,22.72 33.03,29.56 35.80,40.02 26.70,34.16 17.60,40.02 20.37,29.56 11.98,22.72 22.79,22.11" fill="none" stroke="#c3c3c3" stroke-width="3.7" stroke-miterlimit="10"/></svg>
<svg class="b" style="left:10px;top:8px;" width="40" height="40" viewBox="0 0 1067 1067">
<defs><linearGradient id="ag" x1="0.15" y1="0.1" x2="0.85" y2="0.9"><stop offset="0" stop-color="#8232be"/><stop offset="0.5" stop-color="#5a44cc"/><stop offset="1" stop-color="#2d62e4"/></linearGradient></defs>
<circle cx="533" cy="530" r="374" fill="url(#ag)"/>
<path d="M372 715 A248 248 0 1 1 700 715 Q535 630 372 715 Z" fill="none" stroke="#fff" stroke-width="58" stroke-linejoin="round"/>
<path d="M705 365 L475 520 A60 60 0 1 0 580 590 Z" fill="#6ec01e"/></svg>
<svg class="b" style="left:1150px;top:0px;" width="300" height="60" viewBox="0 0 1450 290">
<path d="M132.4 82.6 A55 55 0 1 0 203.5 155.6 A52 52 0 0 1 132.4 82.6 Z" fill="none" stroke="#2a2a2a" stroke-width="5.5" stroke-linejoin="round"/>
<path d="M483 130 H567" stroke="#000" stroke-width="5"/>
<rect x="860" y="95" width="74" height="74" rx="8" fill="none" stroke="#000" stroke-width="6"/>
<path d="M1229 91 L1311 174 M1311 91 L1229 174" stroke="#000" stroke-width="6"/></svg>
<svg class="b" style="left:40px;top:272px;" width="72" height="72" viewBox="0 0 1067 1067">
<defs><clipPath id="gc"><circle cx="528" cy="536" r="385"/></clipPath></defs>
<circle cx="528" cy="536" r="356" fill="none" stroke="#2dd3bd" stroke-width="66"/>
<g clip-path="url(#gc)" fill="#2dd3bd">
<path d="M620 200 C592 245 582 280 576 312 C500 312 465 348 465 400 L465 460 L620 460 L620 505 C622 548 656 580 705 580 L790 580 C822 580 846 558 856 522 L960 522 L960 150 Z"/>
<path d="M150 535 L340 535 C440 535 520 598 520 680 L520 725 L400 725 L400 835 L430 900 L150 920 Z"/>
</g></svg>
<svg class="b" style="left:260px;top:1020px;" width="140" height="47" viewBox="0 0 1450 487">
<rect x="230.2" y="165.2" width="179.6" height="179.6" rx="18" transform="rotate(45 320 255)" fill="none" stroke="#ababab" stroke-width="24"/>
<path d="M284.0 287.2 V243.8 H338.6" fill="none" stroke="#ababab" stroke-width="24" stroke-linejoin="miter"/><path d="M333.6 206.6 L374.6 243.8 L333.6 281.0 Z" fill="#ababab"/>
<circle cx="754" cy="218" r="96" fill="#f5b81f"/><path d="M700 270 H808 V330 Q808 340 798 340 H710 Q700 340 700 330 Z" fill="#f5b81f"/><rect x="710" y="364" width="86" height="20" fill="#f5b81f"/>
<path d="M1107 382 V162 H1203 L1218 192 H1283 V293 H1212 L1197 263 H1107" fill="none" stroke="#ababab" stroke-width="24" stroke-linejoin="miter"/></svg>
<svg class="b" style="left:470px;top:255px;" width="70" height="45" viewBox="0 0 1450 932">
<path fill-rule="evenodd" fill="#4a4a4a" d="M248 352 L360 435 L490 245 L610 352 L740 352 L740 700 L248 700 Z M300 462 L365 502 L495 322 L600 402 L690 402 L690 612 L490 480 L385 625 L300 560 Z"/></svg>
<svg class="b" style="left:690px;top:255px;" width="70" height="45" viewBox="0 0 1450 932"><polygon points="505.00,292.52 556.71,430.82 704.22,437.27 588.67,529.19 628.13,671.47 505.00,589.98 381.87,671.47 421.33,529.19 305.78,437.27 453.29,430.82" fill="none" stroke="#4b5661" stroke-width="48" stroke-miterlimit="10"/></svg>
<svg class="b" style="left:880px;top:255px;" width="70" height="45" viewBox="0 0 1450 932">
<g fill="none" stroke="#4a4a4a" stroke-width="50">
<path d="M485 235 A250 250 0 1 0 662 308"/><path d="M470 346 A140 140 0 1 0 584 386"/><path d="M485 485 V210"/></g>
<circle cx="485" cy="485" r="56" fill="#4a4a4a"/></svg>
<svg class="b" style="left:1370px;top:245px;" width="60" height="50" viewBox="0 0 1280 1067"><path d="M700 250 H815 L1000 560 L815 880 H700 Z" fill="#4a4a4a" stroke="#4a4a4a" stroke-width="70" stroke-linejoin="round"/><g fill="none" stroke="#fff" stroke-width="46" stroke-linejoin="round"><path d="M735 335 H795 L850 408 H1010"/><path d="M735 810 H822 L872 732 H1010"/><path d="M945 560 H838 L792 640 H640"/><path d="M640 455 H730 Q760 455 775 480"/></g><path d="M905 300 L1000 420 L1060 330 Z M905 840 L1000 700 L1060 800 Z" fill="#fff"/><g transform="translate(1280 0) scale(-1 1)"><path d="M700 250 H815 L1000 560 L815 880 H700 Z" fill="#4a4a4a" stroke="#4a4a4a" stroke-width="70" stroke-linejoin="round"/><g fill="none" stroke="#fff" stroke-width="46" stroke-linejoin="round"><path d="M735 335 H795 L850 408 H1010"/><path d="M735 810 H822 L872 732 H1010"/><path d="M945 560 H838 L792 640 H640"/><path d="M640 455 H730 Q760 455 775 480"/></g><path d="M905 300 L1000 420 L1060 330 Z M905 840 L1000 700 L1060 800 Z" fill="#fff"/></g></svg>
<svg class="b" style="left:885px;top:340px;" width="60" height="45" viewBox="0 0 870 652">
<circle cx="315" cy="300" r="114" fill="none" stroke="#858585" stroke-width="22"/>
<path d="M396 386 L480 460" stroke="#858585" stroke-width="32"/>
<path d="M478 298 H592 L535 372 Z" fill="#858585"/></svg>
<svg class="b" style="left:465px;top:795px" width="30" height="30" viewBox="0 0 30 30"><circle cx="14.8" cy="15.15" r="11.55" fill="none" stroke="#4b5661" stroke-width="2.8"/><path d="M9.3 15.6 L13.3 19.5 L20.6 11.6" fill="none" stroke="#4b5661" stroke-width="2.6"/></svg>
<svg class="b" style="left:1195px;top:440px;" width="30" height="30" viewBox="0 0 725 725"><circle cx="390" cy="215" r="92" fill="none" stroke="#4a4a4a" stroke-width="45"/>
<path d="M188 532 V470 Q188 388 395 388 Q602 388 602 470 V532 Z" fill="none" stroke="#4a4a4a" stroke-width="45" stroke-linejoin="miter"/></svg>
<svg class="b" style="left:1195px;top:470px;" width="30" height="30" viewBox="0 0 725 725"><circle cx="390" cy="215" r="92" fill="none" stroke="#4a4a4a" stroke-width="45"/>
<path d="M188 532 V470 Q188 388 395 388 Q602 388 602 470 V532 Z" fill="none" stroke="#4a4a4a" stroke-width="45" stroke-linejoin="miter"/></svg>
<svg class="b" style="left:1195px;top:500px;" width="30" height="30" viewBox="0 0 725 725"><circle cx="390" cy="215" r="92" fill="none" stroke="#4a4a4a" stroke-width="45"/>
<path d="M188 532 V470 Q188 388 395 388 Q602 388 602 470 V532 Z" fill="none" stroke="#4a4a4a" stroke-width="45" stroke-linejoin="miter"/></svg>
<svg class="b" style="left:1195px;top:529px;" width="30" height="30" viewBox="0 0 725 725"><circle cx="390" cy="215" r="92" fill="none" stroke="#4a4a4a" stroke-width="45"/>
<path d="M188 532 V470 Q188 388 395 388 Q602 388 602 470 V532 Z" fill="none" stroke="#4a4a4a" stroke-width="45" stroke-linejoin="miter"/></svg>
<div class="b clip" style="left:1195px;top:587px;width:40px;height:9px;">
<svg class="b" style="left:0;top:2px" width="30" height="30" viewBox="0 0 725 725"><circle cx="390" cy="215" r="92" fill="none" stroke="#4a4a4a" stroke-width="45"/></svg>
</div>
<svg class="b" style="left:1205px;top:555px;" width="120" height="35" viewBox="0 0 1450 423">
<path d="M118 90 H272 L340 160 V312 Q340 328 324 328 H120 Q104 328 104 312 V104 Q104 90 118 90 Z" fill="none" stroke="#4a4a4a" stroke-width="25" stroke-linejoin="round"/>
<path d="M150 158 H255 M150 215 H300 M150 272 H300" stroke="#4a4a4a" stroke-width="22"/>
<rect x="1042" y="97" width="236" height="216" rx="52" fill="#f5f8fe" stroke="#86a9e4" stroke-width="22"/>
<circle cx="1110" cy="222" r="11" fill="#444"/><circle cx="1161" cy="222" r="11" fill="#444"/><circle cx="1212" cy="222" r="11" fill="#444"/></svg>
<svg class="b" style="left:425px;top:885px;" width="45" height="40" viewBox="0 0 1200 1067">
<g fill="none" stroke="#4f4f4f" stroke-width="60">
<path d="M352 400 A260 260 0 0 0 455 775"/><path d="M795 650 A260 260 0 0 0 740 330"/>
<path d="M470 610 V772 H298" stroke-linejoin="miter"/><path d="M852 274 H672 V460" stroke-linejoin="miter"/>
<path d="M225 235 L865 875" stroke-width="56"/></g>
<path d="M450 285 L505 275 L495 335 Z" fill="#4f4f4f"/></svg>
</body></html>
